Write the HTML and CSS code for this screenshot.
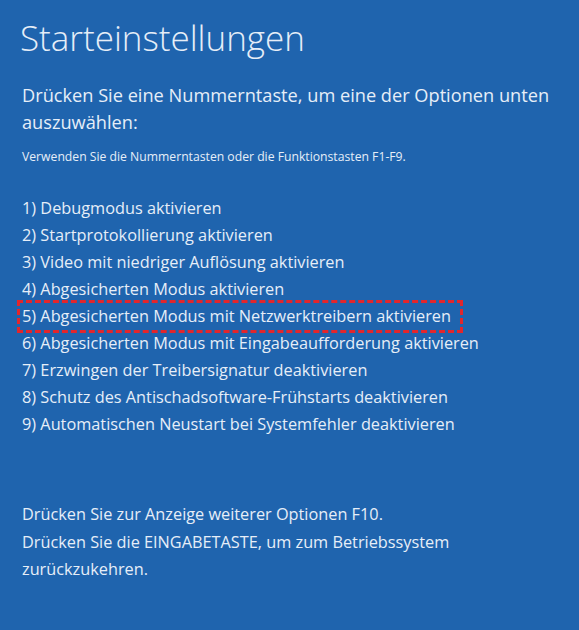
FILE: index.html
```html
<!DOCTYPE html>
<html lang="de">
<head>
    <meta charset="UTF-8">
    <title>Starteinstellungen</title>
    <link rel="stylesheet" href="styles.css">
</head>
<body>
    <main class="screen">
        <h1 class="title">Starteinstellungen</h1>
        <p class="intro">Drücken Sie eine Nummerntaste, um eine der Optionen unten auszuwählen:</p>
        <p class="hint">Verwenden Sie die Nummerntasten oder die Funktionstasten F1-F9.</p>
        <ol class="options">
            <li>1) Debugmodus aktivieren</li>
            <li>2) Startprotokollierung aktivieren</li>
            <li>3) Video mit niedriger Auflösung aktivieren</li>
            <li>4) Abgesicherten Modus aktivieren</li>
            <li class="marked">5) Abgesicherten Modus mit Netzwerktreibern aktivieren</li>
            <li>6) Abgesicherten Modus mit Eingabeaufforderung aktivieren</li>
            <li>7) Erzwingen der Treibersignatur deaktivieren</li>
            <li>8) Schutz des Antischadsoftware-Frühstarts deaktivieren</li>
            <li>9) Automatischen Neustart bei Systemfehler deaktivieren</li>
        </ol>
        <p class="footer">Drücken Sie zur Anzeige weiterer Optionen F10.<br>Drücken Sie die EINGABETASTE, um zum Betriebssystem zurückzukehren.</p>
    </main>
</body>
</html>
```

FILE: styles.css
```css
body {
    margin: 0;
    background: #1f64ae;
    font-family: "Open Sans", "Noto Sans", sans-serif;
    color: #e6eef8;
}

.screen {
    width: 579px;
    height: 630px;
    padding: 14px 0 0 22px;
    box-sizing: border-box;
}

.title {
    margin: 0 0 0 -2px;
    font-size: 35px;
    font-weight: 300;
    line-height: 48px;
}

.intro {
    margin: 20px 0 0;
    width: 545px;
    font-size: 18.2px;
    line-height: 26.5px;
}

.hint {
    margin: 14px 0 0;
    font-size: 12.2px;
    line-height: 16px;
}

.options {
    margin: 30px 0 0;
    padding: 0;
    list-style: none;
    font-size: 16.3px;
    line-height: 27px;
}

.marked {
    margin: -3px 0 -3px -5px;
    width: 438px;
    padding-left: 2px;
    border: 3px dashed #e3262c;
}

.footer {
    margin: 63px 0 0;
    width: 530px;
    font-size: 16.3px;
    line-height: 27.5px;
}
```
